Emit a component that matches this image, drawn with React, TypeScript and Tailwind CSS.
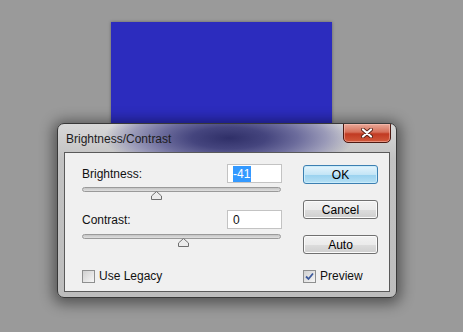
import React from 'react';

const SliderThumb = ({ left }: { left: number }) => (
  <svg
    className="absolute top-[3px]"
    style={{ left: left - 5.5 }}
    width="11"
    height="9"
    viewBox="0 0 11 9"
  >
    <path d="M5.5 0.5 L10.5 5 L10.5 8.5 L0.5 8.5 L0.5 5 Z" fill="#ececec" stroke="#6f6f6f" strokeWidth="1" />
  </svg>
);

const Slider = ({ thumb }: { thumb: number }) => (
  <div className="relative h-[5px] w-[199px] rounded-full border border-[#9a9a9a] bg-[linear-gradient(#c4c4c4,#e0e0e0)]">
    <SliderThumb left={thumb} />
  </div>
);

const Field = ({ children }: { children: React.ReactNode }) => (
  <div className="flex h-[19px] w-[55px] items-center border border-[#c3c3c3] bg-white pl-[5px] text-[12px]">
    {children}
  </div>
);

const WinButton = ({ label, primary }: { label: string; primary?: boolean }) => (
  <div
    className={
      primary
        ? 'flex h-[19px] w-[75px] items-center justify-center rounded-[3px] border border-[#3c7fb1] bg-[linear-gradient(#e5f4fc_0%,#c4e5f6_50%,#98d1ef_51%,#b7e0f4_100%)] text-[12px] text-black shadow-[inset_0_0_0_1px_#c9ecfb]'
        : 'flex h-[19px] w-[75px] items-center justify-center rounded-[3px] border border-[#707070] bg-[linear-gradient(#f2f2f2_0%,#ebebeb_50%,#dddddd_51%,#cfcfcf_100%)] text-[12px] text-black shadow-[inset_0_0_0_1px_#fbfbfb]'
    }
  >
    {label}
  </div>
);

const CheckBox = ({ checked }: { checked?: boolean }) => (
  <div className="flex h-[13px] w-[13px] items-center justify-center border border-[#8e8f8f] bg-[linear-gradient(135deg,#d0d0d0,#f6f6f6)]">
    {checked && (
      <svg width="9" height="9" viewBox="0 0 9 9">
        <path d="M1 4.5 L3.5 7 L8 1.5" fill="none" stroke="#3d5a9c" strokeWidth="1.8" />
      </svg>
    )}
  </div>
);

export default function App() {
  return (
    <div
      className="relative h-[332px] w-[463px] overflow-hidden bg-[#9a9a9a] text-[#111]"
      style={{ fontFamily: '"Liberation Sans", Arial, sans-serif' }}
    >
      {/* Document canvas */}
      <div className="pl-[111px] pt-[22px]">
        <div className="h-[240px] w-[221px] bg-[#2c2cbe] shadow-[0_0_3px_rgba(0,0,0,0.35)]" />
      </div>

      {/* Dialog window */}
      <div className="absolute left-[57px] top-[123px] flex h-[175px] w-[340px] flex-col overflow-hidden rounded-[7px] border border-[#383838] bg-[linear-gradient(#d8d8d8,#c2c2c2_20%,#bdbdbd)] px-[6px] pb-[5px] shadow-[0_2px_14px_4px_rgba(0,0,0,0.45)]">
        {/* Title bar */}
        <div className="relative flex h-[28px] shrink-0 items-center pl-[2px] pt-[2px]">
          <div className="absolute left-[40px] top-[-22px] h-[72px] w-[250px] bg-[radial-gradient(closest-side,#2f2f68_0%,#45457e_30%,#6c6c9c_55%,#9a9ab8_78%,rgba(190,190,205,0)_100%)]" />
          <span className="relative text-[12px] text-[#1c1c1c]">Brightness/Contrast</span>
          <div className="absolute right-[-1px] top-[-1px] flex h-[20px] w-[48px] items-center justify-center rounded-b-[5px] border border-[#4d1a12] bg-[linear-gradient(#e9a999_0%,#d6705a_45%,#c13a22_55%,#d25a3c_100%)] shadow-[inset_0_0_0_1px_rgba(255,200,190,0.5)]">
            <svg width="12" height="10" viewBox="0 0 12 10">
              <path d="M2 1.5 L10 8.5 M10 1.5 L2 8.5" stroke="#5a2418" strokeWidth="4" strokeLinecap="round" />
              <path d="M2 1.5 L10 8.5 M10 1.5 L2 8.5" stroke="#ffffff" strokeWidth="2.2" strokeLinecap="round" />
            </svg>
          </div>
        </div>

        {/* Client area */}
        <div className="relative flex flex-1 flex-col border border-[#5a5a5a] bg-[#f0f0f0] pl-[17px] pt-[11px]">
          <div className="flex gap-[21px]">
            <div className="flex w-[200px] flex-col">
              <div className="flex items-center justify-between">
                <span className="text-[12px]">Brightness:</span>
                <Field>
                  <span className="bg-[#3399ff] pr-[1px] leading-[16px] text-white">-41</span>
                </Field>
              </div>
              <div className="mt-[4px]">
                <Slider thumb={73} />
              </div>
              <div className="mt-[18px] flex items-center justify-between">
                <span className="text-[12px]">Contrast:</span>
                <Field>
                  <span>0</span>
                </Field>
              </div>
              <div className="mt-[5px]">
                <Slider thumb={100} />
              </div>
            </div>
            <div className="mt-px flex w-[75px] flex-col gap-[16px]">
              <WinButton label="OK" primary />
              <WinButton label="Cancel" />
              <WinButton label="Auto" />
            </div>
          </div>

          <div className="mt-[13px] flex items-center">
            <div className="flex w-[221px] items-center gap-[4px]">
              <CheckBox />
              <span className="text-[12px]">Use Legacy</span>
            </div>
            <div className="flex items-center gap-[4px]">
              <CheckBox checked />
              <span className="text-[12px]">Preview</span>
            </div>
          </div>
        </div>
      </div>
    </div>
  );
}
